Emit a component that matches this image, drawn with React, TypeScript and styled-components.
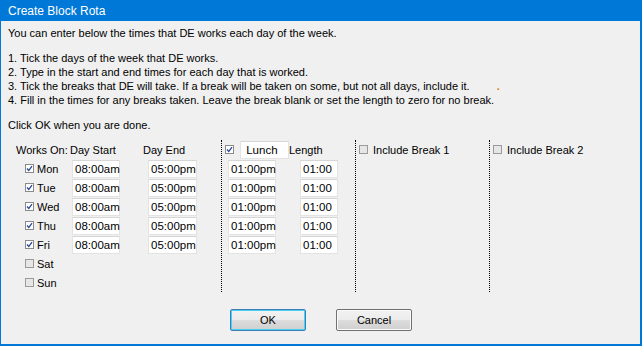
import React from 'react';
import styled, { createGlobalStyle } from 'styled-components';

const GlobalStyle = createGlobalStyle`
  html, body {
    margin: 0;
    padding: 0;
    background: #f0f0f0;
  }
  body {
    font-family: 'Liberation Sans', Arial, sans-serif;
    font-size: 11px;
    color: #000;
  }
`;

const Window = styled.div`
  box-sizing: border-box;
  width: 642px;
  height: 346px;
  display: flex;
  flex-direction: column;
  background: #f0f0f0;
  border-left: 1px solid #0078d7;
  border-right: 2px solid #0078d7;
  border-bottom: 2px solid #0078d7;
`;

const TitleBar = styled.div`
  height: 21px;
  background: #0078d7;
  color: #fff;
  font-size: 12px;
  display: flex;
  align-items: center;
  padding-left: 7px;
  flex-shrink: 0;
`;

const Body = styled.div`
  display: flex;
  flex-direction: column;
  padding: 5px 0 0 7px;
  flex: 1;
`;

const Para = styled.p<{ $top: number }>`
  margin: ${(p) => p.$top}px 0 0 0;
  line-height: 14px;
  white-space: nowrap;
`;

const Mark = styled.span`
  color: #e07a10;
  margin-left: 27px;
  font-weight: bold;
`;

const Form = styled.div`
  display: flex;
  margin: 8px 0 0 8px;
  height: 152px;
`;

const Section = styled.div<{ $width?: number }>`
  display: flex;
  flex-direction: column;
  width: ${(p) => (p.$width ? `${p.$width}px` : 'auto')};
  flex: ${(p) => (p.$width ? 'none' : 1)};
`;

const Divider = styled.div`
  width: 0;
  border-left: 1px dotted #000;
  height: 152px;
`;

const Row = styled.div<{ $pad?: number }>`
  display: flex;
  align-items: center;
  height: 19px;
  padding-left: ${(p) => p.$pad ?? 0}px;
`;

const Cell = styled.div<{ $width: number; $pad?: number }>`
  width: ${(p) => p.$width}px;
  padding-left: ${(p) => p.$pad ?? 0}px;
  box-sizing: border-box;
  display: flex;
  align-items: center;
  flex: none;
`;

const Label = styled.span<{ $gap?: number }>`
  margin-left: ${(p) => p.$gap ?? 0}px;
  white-space: nowrap;
`;

const Box = styled.span<{ $checked?: boolean }>`
  box-sizing: border-box;
  width: 9px;
  height: 9px;
  border: 1px solid ${(p) => (p.$checked ? '#8a8a8a' : '#9a9a9a')};
  background: ${(p) => (p.$checked ? '#fff' : '#e6e6e6')};
  display: inline-flex;
  align-items: center;
  justify-content: center;
  flex: none;
`;

const TimeInput = styled.div<{ $width: number }>`
  box-sizing: border-box;
  width: ${(p) => p.$width}px;
  height: 18px;
  background: #fff;
  border: 1px solid #e3e3e3;
  border-top-color: #d6d6d6;
  padding-left: 2px;
  font-size: 11.5px;
  line-height: 16px;
  white-space: nowrap;
`;

const ButtonBar = styled.div`
  display: flex;
  gap: 30px;
  margin: 17px 0 0 222px;
`;

const Button = styled.button<{ $default?: boolean }>`
  box-sizing: border-box;
  width: 76px;
  height: 22px;
  font-family: 'Liberation Sans', Arial, sans-serif;
  font-size: 11px;
  color: #000;
  padding: 0;
  border-radius: 2px;
  border: 1px solid ${(p) => (p.$default ? '#3c7fb1' : '#707070')};
  box-shadow: inset 0 0 0 1px ${(p) => (p.$default ? '#48d0f7' : '#fbfbfb')};
  background: linear-gradient(#f2f2f2, #ebebeb 50%, #dddddd 51%, #cfcfcf);
`;

const Check: React.FC<{ checked?: boolean }> = ({ checked }) => (
  <Box $checked={checked}>
    {checked && (
      <svg width="7" height="7" viewBox="0 0 7 7">
        <path d="M1 3.5 L2.8 5.5 L6 1.2" fill="none" stroke="#2b4a9a" strokeWidth="1.3" />
      </svg>
    )}
  </Box>
);

const days = [
  { name: 'Mon', on: true },
  { name: 'Tue', on: true },
  { name: 'Wed', on: true },
  { name: 'Thu', on: true },
  { name: 'Fri', on: true },
  { name: 'Sat', on: false },
  { name: 'Sun', on: false },
];

const App: React.FC = () => {
  return (
    <>
      <GlobalStyle />
      <Window>
        <TitleBar>Create Block Rota</TitleBar>
        <Body>
          <Para $top={0}>You can enter below the times that DE works each day of the week.</Para>
          <Para $top={11}>
            1. Tick the days of the week that DE works.
            <br />
            2. Type in the start and end times for each day that is worked.
            <br />
            3. Tick the breaks that DE will take. If a break will be taken on some, but not all days, include it.
            <Mark>.</Mark>
            <br />
            4. Fill in the times for any breaks taken. Leave the break blank or set the length to zero for no break.
          </Para>
          <Para $top={11}>Click OK when you are done.</Para>

          <Form>
            <Section $width={205}>
              <Row>
                <Cell $width={54}>Works On:</Cell>
                <Cell $width={73}>Day Start</Cell>
                <Cell $width={60}>Day End</Cell>
              </Row>
              {days.map((d) => (
                <Row key={d.name}>
                  <Cell $width={56} $pad={9}>
                    <Check checked={d.on} />
                    <Label $gap={3}>{d.name}</Label>
                  </Cell>
                  {d.on && (
                    <>
                      <Cell $width={76}>
                        <TimeInput $width={48}>08:00am</TimeInput>
                      </Cell>
                      <Cell $width={49}>
                        <TimeInput $width={49}>05:00pm</TimeInput>
                      </Cell>
                    </>
                  )}
                </Row>
              ))}
            </Section>
            <Divider />
            <Section $width={133}>
              <Row $pad={3}>
                <Check checked />
                <Cell $width={55} $pad={6}>
                  <TimeInput $width={52}>&nbsp;Lunch</TimeInput>
                </Cell>
                <Label>Length</Label>
              </Row>
              {days
                .filter((d) => d.on)
                .map((d) => (
                  <Row key={d.name} $pad={6}>
                    <Cell $width={72}>
                      <TimeInput $width={48}>01:00pm</TimeInput>
                    </Cell>
                    <TimeInput $width={38}>01:00</TimeInput>
                  </Row>
                ))}
            </Section>
            <Divider />
            <Section $width={133}>
              <Row $pad={3}>
                <Check />
                <Label $gap={5}>Include Break 1</Label>
              </Row>
            </Section>
            <Divider />
            <Section>
              <Row $pad={3}>
                <Check />
                <Label $gap={5}>Include Break 2</Label>
              </Row>
            </Section>
          </Form>

          <ButtonBar>
            <Button $default>OK</Button>
            <Button>Cancel</Button>
          </ButtonBar>
        </Body>
      </Window>
    </>
  );
};

export default App;
